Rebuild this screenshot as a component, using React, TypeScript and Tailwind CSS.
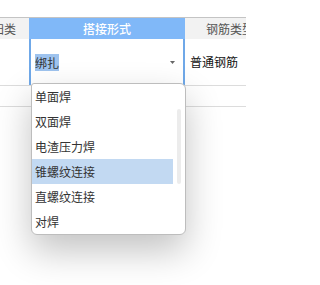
import React from "react";

const options = ["单面焊", "双面焊", "电渣压力焊", "锥螺纹连接", "直螺纹连接", "对焊"];

function Dropdown({ active }: { active: string }) {
    return (
        <div className="absolute left-[31px] top-[83px] w-[155px] h-[152px] bg-white border border-[#bdbdbd] rounded-[6px] rounded-tl-[3px] shadow-[0_16px_36px_rgba(0,0,0,0.24)] flex overflow-hidden">
            <ul className="w-[141px]">
                {options.map((opt) => (
                    <li
                        key={opt}
                        className={`h-[25px] leading-[25px] pl-[3px] text-[12px] text-[#333] ${
                            opt === active ? "bg-[#c2d9f2]" : ""
                        }`}
                    >
                        {opt}
                    </li>
                ))}
            </ul>
            <div className="ml-[4px] pt-[25px]">
                <div className="w-[4px] h-[75px] rounded-full bg-[#ececec]" />
            </div>
        </div>
    );
}

export default function App() {
    return (
        <div
            className="relative w-[246px] h-[285px] overflow-hidden bg-white"
            style={{ fontFamily: '"Noto Sans CJK SC", "Noto Sans", sans-serif' }}
        >
            <div className="h-[17px]" />
            <div className="ml-[-21px] w-[386px]">
                <div className="flex h-[22px] border-t border-[#c4c4c4] bg-[#f2f2f2] text-[12px] leading-[21px]">
                    <div className="w-[50px] text-center text-[#555]">归类</div>
                    <div className="w-[156px] text-center bg-[#80b8f8] text-white font-medium">搭接形式</div>
                    <div className="w-[90px] text-center text-[#555]">钢筋类型</div>
                </div>
                <div className="flex h-[47px] border-b border-[#dcdcdc] text-[12px]">
                    <div className="w-[50px]" />
                    <div className="w-[156px] flex items-center justify-between border-x-2 border-[#6fa8e8] pl-[4px] pr-[8px]">
                        <span className="bg-[#9ec3ee] leading-[17px] text-[#333]">绑扎</span>
                        <svg width="5" height="3" viewBox="0 0 5 3">
                            <path d="M0 0 L5 0 L2.5 3 Z" fill="#666" />
                        </svg>
                    </div>
                    <div className="w-[90px] flex items-center pl-[5px] text-[#111]">普通钢筋</div>
                </div>
                <div className="h-[21px] border-b border-[#dcdcdc]" />
            </div>
            <Dropdown active="锥螺纹连接" />
        </div>
    );
}
